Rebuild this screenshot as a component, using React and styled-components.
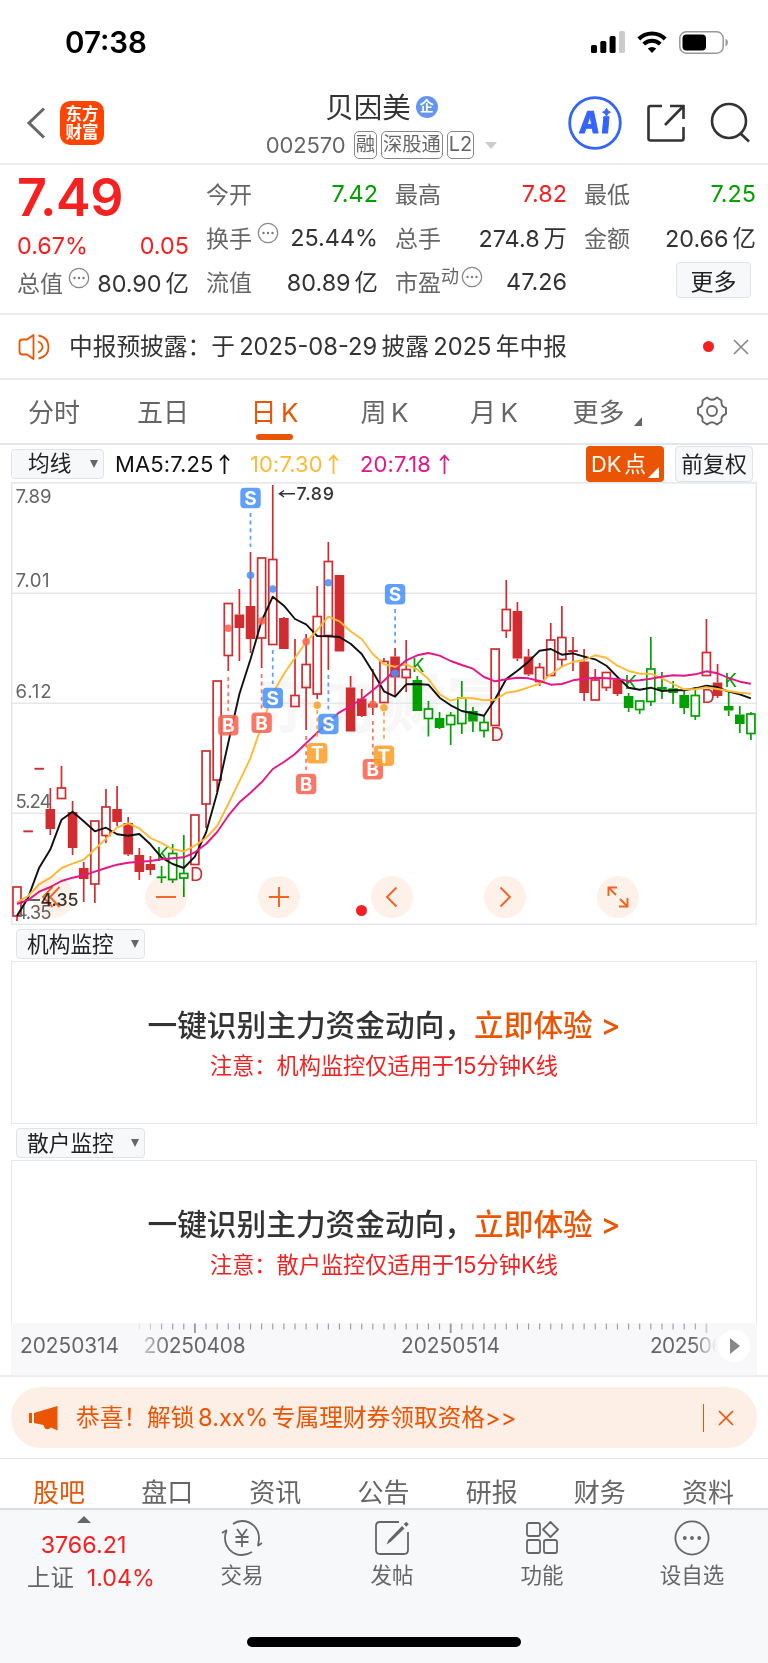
import React from 'react'
import styled, { createGlobalStyle } from 'styled-components'

const GlobalStyle = createGlobalStyle`
    * {
        box-sizing: border-box;
    }
    body {
        margin: 0;
        background: #fff;
        font-family: Inter, "Noto Sans CJK SC", sans-serif;
        color: #333;
    }
`;

const Page = styled.div`
    width: 768px;
    height: 1663px;
    display: flex;
    flex-direction: column;
    overflow: hidden;
    white-space: nowrap;
`;

// ---------- status bar ----------

const StatusBar = styled.div`
    height: 84px;
    padding: 0 39px 0 65px;
    display: flex;
    align-items: center;
    justify-content: space-between;
    color: #000;
`;

const Clock = styled.span`
    font-size: 29.5px;
    font-weight: 600;
`;

const StatusIcons = styled.div`
    display: flex;
    align-items: center;
    gap: 12px;
`;

// ---------- header ----------

const Header = styled.header`
    height: 81px;
    padding: 0 17px 0 26px;
    display: grid;
    grid-template-columns: 158px 1fr 183px;
    align-items: center;
    border-bottom: 2px solid #ededed;
`;

const HeaderLeft = styled.div`
    display: flex;
    align-items: center;
    gap: 14px;
    padding-bottom: 2px;
`;

const BrandLogo = styled.div`
    width: 44px;
    height: 44px;
    border-radius: 10px;
    background: #ff4400;
    color: #fff;
    font-size: 16.5px;
    font-weight: 700;
    line-height: 18px;
    display: flex;
    align-items: center;
    justify-content: center;
    text-align: center;
    white-space: pre;
`;

const HeaderTitle = styled.div`
    display: flex;
    flex-direction: column;
    align-items: center;
    padding: 0 0 0 11px;
`;

const NameLine = styled.div`
    display: flex;
    align-items: center;
    gap: 5px;
    height: 38px;
    font-size: 28.5px;
`;

const CompanyBadge = styled.span`
    width: 22px;
    height: 22px;
    margin-top: 2px;
    border-radius: 50%;
    background: #6496ee;
    color: #fff;
    font-size: 14px;
    font-weight: 700;
    line-height: 20px;
    text-align: center;
`;

const CodeLine = styled.div`
    display: flex;
    align-items: center;
    gap: 4px;
    height: 36px;
    padding-top: 5px;
    font-size: 22px;
    color: #666;
`;

const Code = styled.span`
    margin-right: 4px;
    letter-spacing: -0.1px;
`;

const Tag = styled.span`
    height: 28px;
    padding: 0 1px;
    border: 1.5px solid #888;
    border-radius: 5px;
    font-size: ${props => props.$size || 19.3}px;
    line-height: 24px;
`;

const Caret = styled.i`
    border: ${props => props.$w}px solid transparent;
    border-top: ${props => props.$h}px solid ${props => props.$color || '#666'};
    border-bottom: 0;
`;

const HeaderRight = styled.div`
    display: flex;
    align-items: center;
    justify-content: space-between;
    padding-bottom: 2px;
`;

// ---------- quote ----------

const Quote = styled.section`
    height: 150px;
    padding: 8px 12px 12px 18px;
    display: grid;
    grid-template-columns: 171px 1fr;
    column-gap: 18px;
    border-bottom: 2px solid #ededed;
    font-size: 23px;
`;

const PriceBox = styled.div`
    color: #f52020;
    display: flex;
    flex-direction: column;
`;

const Price = styled.div`
    height: 52px;
    line-height: 50px;
    font-size: 52px;
    font-weight: 600;
    letter-spacing: -0.5px;
    margin-left: -1px;
`;

const Change = styled.div`
    display: flex;
    justify-content: space-between;
    height: 35px;
    padding-top: 2px;
    margin-left: -1px;
    line-height: 38px;
    font-size: 23.4px;
`;

const QuoteGrid = styled.div`
    display: grid;
    grid-template-columns: repeat(3, 171px);
    grid-template-rows: repeat(3, 44px);
    column-gap: 18px;
    margin-top: -2px;
`;

const QuoteCell = styled.div`
    display: flex;
    align-items: center;
    height: 44px;
    margin-left: -1px;
    color: #666;
`;

const QuoteValue = styled.span`
    margin-left: auto;
    font-size: 23.4px;
    word-spacing: -2.6px;
    color: ${props => props.$color || '#333'};
`;

const Sup = styled.small`
    font-size: 18px;
    margin-top: -13px;
`;

const MoreButton = styled.button`
    margin-left: auto;
    margin-right: 5px;
    margin-top: -2px;
    width: 75px;
    height: 36px;
    padding: 0 0 3px;
    border: 1.5px solid #e0e3e8;
    border-radius: 4px;
    background: #f7f8fa;
    font: inherit;
    color: #222;
`;

// ---------- notice ----------

const Notice = styled.section`
    height: 65px;
    padding: 0 19px 0 18px;
    display: flex;
    align-items: center;
    border-bottom: 2px solid #ededed;
    font-size: 23.7px;
`;

const NoticeText = styled.span`
    margin: -3px 0 0 18px;
    flex: 1;
    word-spacing: -2.3px;
`;

const RedDot = styled.i`
    width: 11px;
    height: 11px;
    border-radius: 50%;
    background: #f52020;
`;

// ---------- period tabs ----------

const PeriodTabs = styled.nav`
    height: 65px;
    display: grid;
    grid-template-columns: 108px 110px 113px 107px 112px 114px 96px;
    border-bottom: 2px solid #e4e5ea;
    font-size: 26px;
`;

const PeriodTab = styled.div`
    position: relative;
    display: flex;
    align-items: center;
    justify-content: center;
    padding-bottom: 2px;
    color: ${props => props.$active ? '#ea5504' : '#666'};
    word-spacing: -3px;

    &::after {
        content: '';
        display: ${props => props.$active ? 'block' : 'none'};
        position: absolute;
        bottom: 3px;
        width: 37px;
        height: 6px;
        border-radius: 3px;
        background: #ea5504;
    }
`;

const Corner = styled.i`
    align-self: flex-end;
    margin: 0 0 15px 9px;
    border-left: 8px solid transparent;
    border-bottom: 9px solid #666;
`;

// ---------- chart ----------

const Indicators = styled.div`
    height: 37px;
    padding: 0 15px 0 11px;
    display: flex;
    align-items: center;
    font-size: 22px;
`;

const Select = styled.div`
    width: ${props => props.$width}px;
    height: 30px;
    padding: 0 5px 0 ${props => props.$pad || 11}px;
    display: flex;
    align-items: center;
    justify-content: space-between;
    border: 1.5px solid #e0e3e8;
    border-radius: 4px;
    background: #f7f8fa;
    font-size: 21.7px;
    color: #222;

    span {
        margin-top: -4px;
    }
`;

const Ma = styled.span`
    margin-left: ${props => props.$left}px;
    width: ${props => props.$width}px;
    color: ${props => props.$color};
    letter-spacing: 0.1px;
    display: flex;
    align-items: center;
    justify-content: space-between;
`;

const ToolButton = styled.div`
    position: relative;
    height: 36px;
    width: 78px;
    margin-left: ${props => props.$primary ? 'auto' : '11px'};
    display: flex;
    align-items: center;
    justify-content: center;
    padding: 0 ${props => props.$primary ? '13px' : '0'} 3px 0;
    border: ${props => props.$primary ? '0' : '1.5px solid #e0e3e8'};
    border-radius: 4px;
    background: ${props => props.$primary ? '#ea5504' : '#f7f8fa'};
    color: ${props => props.$primary ? '#fff' : '#222'};
    font-size: 21.8px;
    word-spacing: -3.4px;
`;

const ToolCorner = styled.i`
    position: absolute;
    right: 5px;
    bottom: 4px;
    border-left: 11px solid transparent;
    border-bottom: 11px solid #fff;
`;

const ChartBox = styled.div`
    position: relative;
    height: 443px;
    margin: 0 11px;

    > svg {
        display: block;
    }
`;

const ChartButtons = styled.div`
    position: absolute;
    left: 20.5px;
    top: 394px;
    display: flex;
    gap: 71.2px;
    mix-blend-mode: multiply;
`;

const RoundButton = styled.div`
    width: 42px;
    height: 42px;
    border-radius: 50%;
    background: #fef1ea;
    display: flex;
    align-items: center;
    justify-content: center;
`;

const ChartDot = styled(RedDot)`
    position: absolute;
    left: 345px;
    top: 423px;
`;

const Monitor = styled.section`
    padding: 4px 11px 0;

    > ${Select} {
        margin: 0 0 2px 5px;
    }
`;

const MonitorBox = styled.div`
    height: 163px;
    display: flex;
    flex-direction: column;
    align-items: center;
    border: 1.5px solid #e8e8ec;
    border-bottom-width: ${props => props.$open ? 0 : '1.5px'};
`;

const MonitorTitle = styled.div`
    margin-top: 41px;
    height: 45px;
    line-height: 44px;
    font-size: 29.7px;
    font-weight: 500;

    b {
        font-weight: 500;
        color: #ea5504;
    }
`;

const MonitorNote = styled.div`
    height: 36px;
    line-height: 36px;
    font-size: 22.2px;
    color: #f52020;
`;

const DateAxis = styled.div`
    position: relative;
    height: 52px;
    margin: 0 11px;
    background: #f8f8fb;

    > svg {
        display: block;
    }
`;

const PlayButton = styled.div`
    position: absolute;
    right: 7px;
    top: 7px;
    width: 32px;
    height: 32px;
    border-radius: 50%;
    background: #fff;
    display: flex;
    align-items: center;
    justify-content: center;
    padding-left: 1px;
`;

// ---------- promo ----------

const PromoWrap = styled.section`
    height: 84px;
    padding: 10px 11px;
    border-top: 2px solid #ededed;
    border-bottom: 1.5px solid #e6e6e6;
`;

const Promo = styled.div`
    height: 61px;
    padding: 0 23px 0 18px;
    border-radius: 30px;
    background: #fdeee6;
    color: #ea5504;
    display: flex;
    align-items: center;
    font-size: 23.7px;

    span {
        flex: 1;
        margin: -3px 0 0 17px;
        word-spacing: -3px;
    }
`;

const PromoDivider = styled.i`
    width: 1.5px;
    height: 28px;
    margin-right: 14px;
    background: #ea5504;
`;

// ---------- bottom ----------

const InfoTabs = styled.nav`
    height: 51px;
    padding: 0 6px 0 5px;
    display: grid;
    grid-template-columns: repeat(7, 1fr);
    border-bottom: 2px solid #dcdde4;
    font-size: 26px;
    line-height: 67px;
    overflow: hidden;
    text-align: center;
`;

const InfoTab = styled.div`
    color: ${props => props.$active ? '#ea5504' : '#666'};
`;

const BottomBar = styled.footer`
    flex: 1;
    background: #f7f8fa;
    display: flex;
    flex-direction: column;
    align-items: center;
    justify-content: space-between;
    padding-bottom: 16px;
`;

const BottomItems = styled.div`
    align-self: stretch;
    display: grid;
    grid-template-columns: 167px repeat(4, 150px);
`;

const IndexBox = styled.div`
    display: flex;
    flex-direction: column;
    align-items: center;
    padding: 6px 0 0 0;
    font-size: 23.3px;
    color: #f52020;
    line-height: 33px;

    i {
        border: 7px solid transparent;
        border-top: 0;
        border-bottom: 7px solid #666;
        margin-bottom: 5px;
    }

    div {
        display: flex;
        gap: 13px;
        padding-left: 15px;
    }

    em {
        font-style: normal;
        color: #666;
    }
`;

const BottomItem = styled.div`
    display: flex;
    flex-direction: column;
    align-items: center;
    padding-top: 9px;
    font-size: 21.5px;
    line-height: 32px;
    color: #666;

    svg {
        margin-bottom: 2px;
    }
`;

const HomeIndicator = styled.div`
    width: 274px;
    height: 10px;
    border-radius: 5px;
    background: #000;
`;

// ---------- icons ----------

const MoreInfo = styled.svg`
    margin: -8px 0 0 ${props => props.$gap}px;
`;

const InfoIcon = ({ gap = 5 }) => (
    <MoreInfo $gap={gap} width="22" height="22" viewBox="0 0 22 22">
        <circle cx="11" cy="11" r="9.7" fill="none" stroke="#888" strokeWidth="1.3" />
        <g fill="#777">
            <circle cx="6.5" cy="11" r="1.2" />
            <circle cx="11" cy="11" r="1.2" />
            <circle cx="15.5" cy="11" r="1.2" />
        </g>
    </MoreInfo>
);

const CloseIcon = ({ size, color }) => (
    <svg width={size} height={size} viewBox="0 0 16 16" stroke={color} strokeWidth="1.7">
        <path d="M1 1 L15 15 M15 1 L1 15" />
    </svg>
);

const MaArrow = ({ color }) => (
    <svg width="11" height="20" viewBox="0 0 11 20" fill="none" stroke={color} strokeWidth="1.8">
        <path d="M5.5 20 V1.5 M1 6.5 L5.5 1.5 L10 6.5" />
    </svg>
);

// ---------- chart data ----------

// [kind, high, top, bottom, low]
// r = hollow red, R = solid red, g = hollow green, G = solid green
const candles = [
    ['r', 405, 405, 434, 439], ['R', 349, 348.4, 350.3, 350], ['R', 287, 285.8, 287.7, 287],
    ['R', 306, 327, 347, 353], ['r', 284, 306, 316.5, 317], ['R', 319, 330, 366, 373],
    ['R', 380, 386, 397, 420], ['r', 339, 339, 402, 421], ['r', 307, 325, 353.5, 361],
    ['R', 304, 327, 340, 344], ['R', 335, 341, 372.5, 374], ['R', 366, 373, 390, 398],
    ['R', 374, 382, 388, 393], ['G', 384, 394.4, 396.2, 401], ['g', 362, 371.5, 397.5, 401],
    ['g', 353, 391.5, 396, 415], ['r', 333, 333, 382.5, 383], ['r', 269, 269, 322, 346],
    ['r', 199, 199, 298, 310], ['r', 121.5, 121.5, 173.5, 189], ['R', 107, 132.5, 146, 179],
    ['R', 70, 124, 157, 171], ['r', 76, 76, 156, 186], ['r', 3, 77.5, 162.5, 163],
    ['R', 135, 136, 167, 167], ['r', 157, 213.5, 224.5, 224], ['r', 152, 182.5, 205.5, 248],
    ['r', 104, 134.5, 212, 217], ['r', 60, 79.5, 153.5, 188], ['R', 93, 93, 169.5, 169],
    ['R', 194, 205.5, 249.5, 249], ['R', 207, 216.5, 234, 235], ['R', 187, 221.5, 225.5, 233],
    ['r', 176, 179.5, 220.5, 221], ['R', 166, 174.5, 195.5, 215], ['r', 158, 187.5, 195.5, 210],
    ['G', 194, 198, 229, 229], ['g', 219, 227, 236.5, 254.5], ['G', 230, 236, 246, 247],
    ['g', 230, 233.5, 242.5, 263], ['g', 199, 216, 241.5, 252], ['G', 225, 229, 239.5, 250],
    ['g', 234, 240.5, 248.5, 255.5], ['r', 167, 167, 243.5, 244], ['r', 98, 127.5, 148.5, 156],
    ['R', 120, 129, 176.5, 179], ['R', 167, 174.5, 192.5, 194], ['r', 181, 185.5, 199.5, 204],
    ['r', 141, 158, 193.5, 193], ['r', 124, 155.5, 177.5, 184], ['R', 155, 168, 170, 189],
    ['R', 167, 179.5, 211, 219], ['r', 187, 198, 218, 218], ['r', 190, 190.5, 205.5, 209],
    ['R', 197, 197.5, 212, 214], ['G', 211, 214, 226, 230], ['g', 219, 219, 227.5, 232],
    ['g', 155, 187, 219.5, 224], ['G', 190, 205, 207.8, 217], ['G', 199, 206.3, 211, 222],
    ['G', 208, 213, 226, 232], ['g', 205, 213.5, 234, 238], ['r', 137, 170.5, 193.5, 194],
    ['R', 182, 200.5, 214, 216], ['G', 210, 224, 228.5, 234], ['G', 224, 232.5, 242, 251],
    ['g', 230, 232, 251.5, 258],
]

const ma5 = [434, 415.7, 385.7, 367.3, 337.7, 329.7, 339.3, 349.3, 345.7, 352.3, 353.7, 352, 362.3, 375.7, 382, 386, 374.7,
    350.7, 310.7, 260.7, 212, 177.3, 139, 114.7, 123.7, 137, 142.3, 154, 154.3, 155, 161.7, 172, 189.7, 209.3, 214.7, 202.3,
    202, 202.7, 215.7, 223.3, 229, 231.3, 233.7, 217, 197, 188.7, 179.7, 168.7, 167, 172.7, 171.3, 174.7, 177.3, 183.7, 195,
    205.7, 207.7, 205.7, 209, 208.3, 208.3, 206.3, 203.7, 205.3, 209.7, 212.3, 216.3]

const ma10 = [420.3, 414, 402.3, 395.7, 386, 381.7, 377.7, 367.3, 356.7, 345.3, 341.3, 346.3, 356, 361, 367.3, 369.3, 363.7,
    356, 344, 322, 299.3, 276, 243.7, 211.3, 192, 175.7, 160.3, 148, 134.7, 139.3, 149.3, 157, 172, 182.3, 184.7, 182.3,
    187.3, 197, 212.3, 218.7, 215.7, 216.3, 218.3, 217.7, 210.7, 209, 205.3, 201.7, 192.3, 184.7, 180, 178, 173.3, 175.7,
    183.7, 189, 191.7, 191.7, 196.3, 202, 207.3, 207.3, 205.3, 207, 209, 210.7, 211.7]

const ma20 = [422, 418, 409.7, 405, 399, 395.7, 393.3, 389.7, 386, 382.7, 380.7, 379.7, 379, 377.3, 376.3, 375.3, 370.3,
    362, 350, 333.7, 320.3, 310.7, 300.3, 287, 280, 272, 261.3, 250.7, 239.7, 230.3, 224, 217, 208.3, 198.7, 188, 178.3,
    173.3, 171, 173.7, 179, 183, 186.7, 195, 199.3, 197.3, 195.7, 196.3, 199, 202.7, 202, 198.3, 196.7, 195.7, 196.3, 197,
    199, 198.3, 196.7, 194.7, 193.3, 193.7, 192.3, 189.3, 191.3, 196, 199.7, 201.7]

// trade marks: i = candle index, dot / box = y, dash = [from, to]
const marks = [
    { t: 'B', i: 19, dot: 146.3, dash: [195, 229], box: 243.3 },
    { t: 'S', i: 21, dot: 93.3, dash: [31, 65], box: 16 },
    { t: 'B', i: 22, dot: 139, dash: [192, 227], box: 240.7 },
    { t: 'S', i: 23, dot: 107, dash: [168, 202], box: 216 },
    { t: 'B', i: 26, dot: 159.7, dash: [254, 288], box: 302 },
    { t: 'S', i: 28, dot: 100.7, dash: [193, 228], box: 242 },
    { t: 'T', i: 27, dot: 223.3, dash: [228, 256], box: 271.3 },
    { t: 'B', i: 32, dot: 222.3, dash: [239, 273], box: 287.3 },
    { t: 'T', i: 33, dot: 225.7, dash: [230, 260], box: 273.7 },
    { t: 'S', i: 34, dot: 191.3, dash: [127, 161], box: 112.3 },
]

const markColors = { B: '#fd6350', S: '#4792fc', T: '#ff9f28' }

const signals = [
    ['K', 145.5, 378.7], ['D', 179, 398.5], ['K', 401, 189.7], ['D', 479.5, 259],
    ['K', 613.5, 207], ['D', 690.5, 220.7], ['K', 713.5, 204.7],
]

const axis = [['7.89', 20.5], ['7.01', 105.3], ['6.12', 216], ['5.24', 326.3], ['4.35', 436.5]]

const RED = '#d12c2f'
const GREEN = '#00a000'

const px = i => 6 + i * 11.12
const line = points => points.map((y, i) => `${px(i).toFixed(1)},${y}`).join(' ')

const Candle = ({ x, data }) => {
    const [kind, high, top, bottom, low] = data
    const color = kind.toLowerCase() === 'r' ? RED : GREEN
    const solid = kind === 'R' || kind === 'G'
    return (
        <g stroke={color} strokeWidth="1.7" fill={solid ? color : 'none'}>
            {high < top && <path d={`M${x} ${high} V${top}`} />}
            {low > bottom && <path d={`M${x} ${bottom} V${low}`} />}
            {solid
                ? <rect x={x - 4.8} y={top} width="9.6" height={bottom - top} stroke="none" />
                : <rect x={x - 4} y={top} width="8" height={bottom - top} />}
        </g>
    )
}

const Mark = ({ mark }) => {
    const x = px(mark.i)
    const color = markColors[mark.t]
    return (
        <g opacity="0.87">
            <path d={`M${x} ${mark.dash[0]} V${mark.dash[1]}`} stroke={color} strokeWidth="1.8" strokeDasharray="4 3.6" />
            <circle cx={x} cy={mark.dot} r="3.8" fill={color} />
            <rect x={x - 10.2} y={mark.box - 10.2} width="20.4" height="20.4" rx="4" fill={color} />
            <text x={x} y={mark.box + 6.8} fontSize="19" fontWeight="700" fill="#fff" textAnchor="middle">{mark.t}</text>
        </g>
    )
}

const KChart = () => (
    <svg width="746" height="443" viewBox="0 0 746 443" fontFamily='Inter, "Noto Sans CJK SC", sans-serif'>
        <text x="246" y="245" fontSize="63" fontWeight="700" fill="#f7f7f7">东方财富</text>
        <g fill="none" stroke="#e4e7ec" strokeWidth="1.5">
            <rect x="0.7" y="0.9" width="744.6" height="441.4" />
            <path d="M0 111.3 H745 M0 221.3 H745 M0 331.3 H745" />
        </g>
        {candles.map((data, i) => <Candle key={i} x={px(i)} data={data} />)}
        <g fill="#666" fontSize="18.6">
            {axis.map(([label, y]) => <text key={label} x="4.5" y={y} textLength={label === '7.01' ? 34 : 36}>{label}</text>)}
        </g>
        <g fill="#333" fontSize="17.8" fontWeight="500">
            <text x="285.5" y="17.9" textLength="37.5">7.89</text>
            <text x="29.5" y="424.3" textLength="38">4.35</text>
            <path d="M284 11.7 H269 M273 8.5 L268.5 11.7 L273 15" fill="none" stroke="#333" strokeWidth="1.5" />
            <path d="M29 418 H14" stroke="#333" strokeWidth="1.5" />
        </g>
        <g fontSize="18.5">
            {signals.map(([label, x, y]) => (
                <text key={x} x={x} y={y} fill={label === 'K' ? GREEN : RED}>{label}</text>
            ))}
        </g>
        <g fill="none" strokeWidth="1.9" strokeLinejoin="round">
            <polyline points={line(ma5)} stroke="#111" />
            <polyline points={line(ma10)} stroke="#ffb933" />
            <polyline points={line(ma20)} stroke="#e6158a" />
        </g>
        {marks.map(mark => <Mark key={mark.t + mark.i} mark={mark} />)}
    </svg>
)

const buttonPaths = [
    'M17.5 1 L8 11 L17.5 21 M10.5 1 L1 11 L10.5 21',
    'M1 11 H21',
    'M1 11 H21 M11 1 V21',
    'M15.5 1.5 L6 11 L15.5 20.5',
    'M6.5 1.5 L16 11 L6.5 20.5',
    'M1.5 10 V1.5 H10 M1.5 1.5 L9 9 M20.5 12 V20.5 H12 M20.5 20.5 L13 13',
]

const ticks = Array.from({ length: 52 }, (_, n) => n + 11)
const majorTicks = [16, 39, 62]

const Timeline = () => (
    <svg width="746" height="51" viewBox="0 0 746 51" fontSize="20.8" fill="#666">
        <defs>
            <linearGradient id="fadeIn">
                <stop offset="0" stopColor="#f8f8fb" />
                <stop offset="1" stopColor="#f8f8fb" stopOpacity="0" />
            </linearGradient>
            <linearGradient id="fadeOut">
                <stop offset="0" stopColor="#f8f8fb" stopOpacity="0" />
                <stop offset="1" stopColor="#f8f8fb" />
            </linearGradient>
        </defs>
        {ticks.map(i => (
            <path key={i} d={`M${px(i)} 0.5 V${majorTicks.includes(i) ? 10 : 6.5}`} stroke="#999" strokeWidth={majorTicks.includes(i) ? 1.8 : 1.1} />
        ))}
        <text x="132.5" y="30" textLength="102">20250408</text>
        <text x="390" y="30" textLength="99">20250514</text>
        <text x="639" y="30" textLength="99">20250620</text>
        <rect x="120" y="0" width="38" height="51" fill="url(#fadeIn)" />
        <rect x="682" y="0" width="24" height="51" fill="url(#fadeOut)" />
        <rect x="706" y="0" width="40" height="51" fill="#f8f8fb" />
        <text x="9" y="30" textLength="99">20250314</text>
    </svg>
)

const MonitorPanel = ({ name, open }) => (
    <Monitor>
        <Select $width={129} $pad={10}><span>{name}</span><Caret $w={4.5} $h={8} /></Select>
        <MonitorBox $open={open}>
            <MonitorTitle>一键识别主力资金动向，<b>立即体验 &gt;</b></MonitorTitle>
            <MonitorNote>注意：{name}仅适用于15分钟K线</MonitorNote>
        </MonitorBox>
    </Monitor>
)

function App() {
    return (
        <Page>
            <GlobalStyle />
            <StatusBar>
                <Clock>07:38</Clock>
                <StatusIcons>
                    <svg width="34" height="22" viewBox="0 0 34 22">
                        <rect x="0" y="14" width="6" height="8" rx="1.6" />
                        <rect x="9.3" y="10" width="6" height="12" rx="1.6" />
                        <rect x="18.6" y="5" width="6" height="17" rx="1.6" />
                        <rect x="28" y="0" width="6" height="22" rx="1.6" fill="#ccc" />
                    </svg>
                    <svg width="30" height="22" viewBox="0 0 30 22" fill="none" stroke="#000" strokeWidth="4">
                        <path d="M1.8 8 A18.5 18.5 0 0 1 28.2 8" />
                        <path d="M6.8 13.2 A11.5 11.5 0 0 1 23.2 13.2" />
                        <path d="M10.8 17.6 A6 6 0 0 1 19.2 17.6 L15 22 Z" fill="#000" stroke="none" />
                    </svg>
                    <svg width="50" height="23" viewBox="0 0 50 23">
                        <rect x="0.8" y="0.8" width="43.4" height="21.4" rx="6.5" fill="none" stroke="#999" strokeWidth="1.5" />
                        <rect x="3.5" y="3.5" width="23.5" height="16" rx="4" />
                        <path d="M46.5 7.5 Q49 9 49 11.5 Q49 14 46.5 15.5 Z" fill="#999" />
                    </svg>
                </StatusIcons>
            </StatusBar>

            <Header>
                <HeaderLeft>
                    <svg width="20" height="32" viewBox="0 0 20 32" fill="none" stroke="#666" strokeWidth="3">
                        <path d="M18 1.5 L3 16 L18 30.5" />
                    </svg>
                    <BrandLogo>{'东方\n财富'}</BrandLogo>
                </HeaderLeft>
                <HeaderTitle>
                    <NameLine>贝因美<CompanyBadge>企</CompanyBadge></NameLine>
                    <CodeLine>
                        <Code>002570</Code>
                        <Tag>融</Tag>
                        <Tag>深股通</Tag>
                        <Tag $size={20}>L2</Tag>
                        <Caret $w={6.5} $h={7} $color="#ccc" style={{ marginLeft: 7 }} />
                    </CodeLine>
                </HeaderTitle>
                <HeaderRight>
                    <svg width="54" height="54" viewBox="0 0 54 54">
                        <circle cx="27" cy="27" r="25.3" fill="none" stroke="#3563fd" strokeWidth="2.8" />
                        <g fill="#3563fd" stroke="#3563fd" strokeLinejoin="round" fontSize="30" fontWeight="800" fontFamily="Inter, sans-serif" transform="translate(4 0) skewX(-5)">
                            <text x="10" y="37.5" textLength="20" lengthAdjust="spacingAndGlyphs">A</text>
                            <text x="32" y="37.5">ı</text>
                        </g>
                        <path d="M38.5 12.2 Q39.2 15.6 42.5 16.2 Q39.2 16.8 38.5 20.2 Q37.8 16.8 34.5 16.2 Q37.8 15.6 38.5 12.2 Z" fill="#3563fd" stroke="#3563fd" />
                    </svg>
                    <svg width="40" height="40" viewBox="0 0 40 40" fill="none" stroke="#333" strokeWidth="2.6">
                        <path d="M16 3 H4.5 Q2.5 3 2.5 5 V35.5 Q2.5 37.5 4.5 37.5 H35.5 Q37.5 37.5 37.5 35.5 V24" />
                        <path d="M24 3 H37.5 V16 M37 3.5 L19 22" />
                    </svg>
                    <svg width="41" height="41" viewBox="0 0 41 41" fill="none" stroke="#333" strokeWidth="2.6">
                        <circle cx="19" cy="19" r="17" />
                        <path d="M30 31 L39 39.5" />
                    </svg>
                </HeaderRight>
            </Header>

            <Quote>
                <PriceBox>
                    <Price>7.49</Price>
                    <Change><span>0.67%</span><span>0.05</span></Change>
                    <QuoteCell>总值<InfoIcon /><QuoteValue>80.90 亿</QuoteValue></QuoteCell>
                </PriceBox>
                <QuoteGrid>
                    <QuoteCell>今开<QuoteValue $color={GREEN}>7.42</QuoteValue></QuoteCell>
                    <QuoteCell>最高<QuoteValue $color="#f52020">7.82</QuoteValue></QuoteCell>
                    <QuoteCell>最低<QuoteValue $color={GREEN}>7.25</QuoteValue></QuoteCell>
                    <QuoteCell>换手<InfoIcon gap={5} /><QuoteValue>25.44%</QuoteValue></QuoteCell>
                    <QuoteCell>总手<QuoteValue>274.8 万</QuoteValue></QuoteCell>
                    <QuoteCell>金额<QuoteValue>20.66 亿</QuoteValue></QuoteCell>
                    <QuoteCell>流值<QuoteValue>80.89 亿</QuoteValue></QuoteCell>
                    <QuoteCell>市盈<Sup>动</Sup><InfoIcon gap={2} /><QuoteValue>47.26</QuoteValue></QuoteCell>
                    <QuoteCell><MoreButton>更多</MoreButton></QuoteCell>
                </QuoteGrid>
            </Quote>

            <Notice>
                <svg width="33" height="28" viewBox="0 0 33 28" fill="none" stroke="#ea5504" strokeWidth="1.8" strokeLinejoin="round">
                    <path d="M15.5 2 V26 L9 21.5 H4.5 Q1.5 21.5 1.5 18.5 V9.5 Q1.5 6.5 4.5 6.5 H9 Z" />
                    <path d="M20 8.5 Q24.5 10.5 24.5 14 Q24.5 17.5 20 19.5" />
                    <path d="M20.5 2.5 Q30.5 4.5 30.5 14 Q30.5 23.5 20.5 25.5" />
                </svg>
                <NoticeText>中报预披露：于 2025-08-29 披露 2025 年中报</NoticeText>
                <RedDot style={{ marginRight: 19 }} />
                <CloseIcon size={16} color="#888" />
            </Notice>

            <PeriodTabs>
                <PeriodTab>分时</PeriodTab>
                <PeriodTab>五日</PeriodTab>
                <PeriodTab $active>日 K</PeriodTab>
                <PeriodTab>周 K</PeriodTab>
                <PeriodTab>月 K</PeriodTab>
                <PeriodTab>更多<Corner /></PeriodTab>
                <PeriodTab>
                    <svg width="32" height="30" viewBox="0 0 32 30" fill="none" stroke="#666" strokeWidth="1.9" strokeLinejoin="round">
                        <path d="M11 1.5 Q16 6 21 1.5 L25.5 4.5 Q24.5 10.5 30 12 V18 Q24.5 19.5 25.5 25.5 L21 28.5 Q16 24 11 28.5 L6.5 25.5 Q7.5 19.5 2 18 V12 Q7.5 10.5 6.5 4.5 Z" />
                        <circle cx="16" cy="15" r="5" />
                    </svg>
                </PeriodTab>
            </PeriodTabs>

            <Indicators>
                <Select $width={93} $pad={16}><span>均线</span><Caret $w={4.5} $h={8} /></Select>
                <Ma $left={11} $width={115} $color="#111">MA5:7.25<MaArrow color="#111" /></Ma>
                <Ma $left={20} $width={89} $color="#ffb933">10:7.30<MaArrow color="#ffb933" /></Ma>
                <Ma $left={21} $width={90} $color="#e6158a">20:7.18<MaArrow color="#e6158a" /></Ma>
                <ToolButton $primary>DK 点<ToolCorner /></ToolButton>
                <ToolButton>前复权</ToolButton>
            </Indicators>

            <ChartBox>
                <KChart />
                <ChartButtons>
                    {buttonPaths.map(d => (
                        <RoundButton key={d}>
                            <svg width="22" height="22" viewBox="0 0 22 22" fill="none" stroke="#f0641e" strokeWidth="1.9">
                                <path d={d} />
                            </svg>
                        </RoundButton>
                    ))}
                </ChartButtons>
                <ChartDot />
            </ChartBox>

            <MonitorPanel name="机构监控" />
            <MonitorPanel name="散户监控" open />

            <DateAxis>
                <Timeline />
                <PlayButton>
                    <svg width="10" height="16" viewBox="0 0 10 16">
                        <path d="M0 0 L10 8 L0 16 Z" fill="#888" />
                    </svg>
                </PlayButton>
            </DateAxis>

            <PromoWrap>
                <Promo>
                    <svg width="30" height="26" viewBox="0 0 30 26" fill="#ea5504">
                        <path d="M0 8 H3 V18 H0 Z M5 8 L28.5 1 V25.5 L22 22.5 Q19 25.5 16 23.5 L14.5 20 L5 18 Z" />
                    </svg>
                    <span>恭喜！解锁 8.xx% 专属理财券领取资格&gt;&gt;</span>
                    <PromoDivider />
                    <CloseIcon size={16} color="#ea5504" />
                </Promo>
            </PromoWrap>

            <InfoTabs>
                <InfoTab $active>股吧</InfoTab>
                <InfoTab>盘口</InfoTab>
                <InfoTab>资讯</InfoTab>
                <InfoTab>公告</InfoTab>
                <InfoTab>研报</InfoTab>
                <InfoTab>财务</InfoTab>
                <InfoTab>资料</InfoTab>
            </InfoTabs>

            <BottomBar>
                <BottomItems>
                    <IndexBox>
                        <i />
                        <span>3766.21</span>
                        <div><em>上证</em><span>1.04%</span></div>
                    </IndexBox>
                    <BottomItem>
                        <svg width="42" height="38" viewBox="0 0 42 38" fill="none" stroke="#666" strokeWidth="1.8">
                            <path d="M12 5 Q16 2 21 2 A17 17 0 0 1 38 19 Q38 22 37 26 M36.5 27 L41 24" />
                            <path d="M31 33 Q26 36 21 36 A17 17 0 0 1 4 19 Q4 15 5.5 12 M1 14 L6 11" />
                            <path d="M16 10 L21 17 L26 10 M21 17 V28 M14.5 18 H27.5 M14.5 23 H27.5" />
                        </svg>
                        交易
                    </BottomItem>
                    <BottomItem>
                        <svg width="36" height="38" viewBox="0 0 36 38" fill="none" stroke="#666" strokeWidth="1.8">
                            <path d="M25 3 H6 Q2 3 2 7 V31 Q2 35 6 35 H30 Q34 35 34 31 V13" />
                            <path d="M12.5 25.5 L14.5 21 L28 7 L30.5 9.5 L16.5 23 Z" fill="#666" stroke="none" />
                            <path d="M31 6.5 L33.5 4" strokeWidth="3.6" />
                        </svg>
                        发帖
                    </BottomItem>
                    <BottomItem>
                        <svg width="36" height="38" viewBox="0 0 36 38" fill="none" stroke="#666" strokeWidth="1.8">
                            <rect x="3" y="4" width="13" height="13" rx="2" />
                            <rect x="3" y="21" width="13" height="13" rx="2" />
                            <rect x="20" y="21" width="13" height="13" rx="2" />
                            <path d="M26.5 3 L34 10.5 L26.5 18 L19 10.5 Z" strokeLinejoin="round" />
                        </svg>
                        功能
                    </BottomItem>
                    <BottomItem>
                        <svg width="38" height="38" viewBox="0 0 38 38" fill="none" stroke="#666" strokeWidth="1.8">
                            <circle cx="19" cy="19" r="16.6" />
                            <g fill="#666" stroke="none">
                                <circle cx="11.8" cy="19" r="1.9" />
                                <circle cx="19" cy="19" r="1.9" />
                                <circle cx="26.2" cy="19" r="1.9" />
                            </g>
                        </svg>
                        设自选
                    </BottomItem>
                </BottomItems>
                <HomeIndicator />
            </BottomBar>
        </Page>
    )
}

export default App;
